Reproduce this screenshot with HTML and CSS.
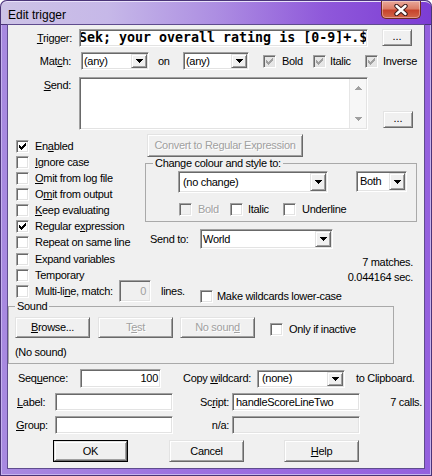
FILE: index.html
```html
<!DOCTYPE html>
<html lang="en">
<head>
<meta charset="utf-8">
<title>Edit trigger</title>
<link rel="stylesheet" href="styles.css">
</head>
<body>
<div class="window">
  <div class="titlebar">
    <span class="title">Edit trigger</span>
    <div class="close">
      <svg width="16" height="12" viewBox="0 0 16 12"><path d="M3.5 2L12.5 10M12.5 2L3.5 10" stroke="#3b1c1c" stroke-width="4.4" stroke-linecap="round"/><path d="M3.5 2L12.5 10M12.5 2L3.5 10" stroke="#fff" stroke-width="2.4" stroke-linecap="round"/></svg>
    </div>
  </div>
  <div class="client">
    <div class="row r-trigger">
      <span class="lbl w-trig"><u>T</u>rigger:</span>
      <div class="edit e-trigger"><div class="clip"><span class="mono">Sek; your overall rating is [0-9]+.$</span></div></div>
      <div class="btn b-dots b-dots1">...</div>
    </div>

    <div class="row r-match">
      <span class="lbl w-match">Mat<u>c</u>h:</span>
      <div class="edit combo c-any1"><span class="ctext">(any)</span><span class="dd"><svg width="7" height="4" viewBox="0 0 7 4"><path d="M0 0h7v1H0zM1 1h5v1H1zM2 2h3v1H2zM3 3h1v1H3z"/></svg></span></div>
      <span class="on">on</span>
      <div class="edit combo c-any2"><span class="ctext">(any)</span><span class="dd"><svg width="7" height="4" viewBox="0 0 7 4"><path d="M0 0h7v1H0zM1 1h5v1H1zM2 2h3v1H2zM3 3h1v1H3z"/></svg></span></div>
      <div class="chk i-bold"><span class="box ind"><svg class="tick" width="7" height="7" viewBox="0 0 7 7"><path d="M6 0h1v1h-1zM5 1h2v1h-2zM0 2h1v1h-1zM4 2h3v1h-3zM0 3h2v1h-2zM3 3h3v1h-3zM0 4h5v1h-5zM1 5h3v1h-3zM2 6h1v1h-1z"/></svg></span><span>Bold</span></div>
      <div class="chk i-italic"><span class="box ind"><svg class="tick" width="7" height="7" viewBox="0 0 7 7"><path d="M6 0h1v1h-1zM5 1h2v1h-2zM0 2h1v1h-1zM4 2h3v1h-3zM0 3h2v1h-2zM3 3h3v1h-3zM0 4h5v1h-5zM1 5h3v1h-3zM2 6h1v1h-1z"/></svg></span><span>Italic</span></div>
      <div class="chk i-inverse"><span class="box ind"><svg class="tick" width="7" height="7" viewBox="0 0 7 7"><path d="M6 0h1v1h-1zM5 1h2v1h-2zM0 2h1v1h-1zM4 2h3v1h-3zM0 3h2v1h-2zM3 3h3v1h-3zM0 4h5v1h-5zM1 5h3v1h-3zM2 6h1v1h-1z"/></svg></span><span>Inverse</span></div>
    </div>

    <div class="row r-send">
      <span class="lbl w-send"><u>S</u>end:</span>
      <div class="edit e-send">
        <div class="ta"></div>
        <div class="vscroll">
          <svg width="7" height="4" viewBox="0 0 7 4"><path d="M3 0h1v1H3zM2 1h3v1H2zM1 2h5v1H1zM0 3h7v1H0z"/></svg>
          <svg width="7" height="4" viewBox="0 0 7 4"><path d="M0 0h7v1H0zM1 1h5v1H1zM2 2h3v1H2zM3 3h1v1H3z"/></svg>
        </div>
      </div>
      <div class="btn b-dots b-dots2">...</div>
    </div>

    <div class="mid">
      <div class="clist">
        <div class="chk"><span class="box"><svg class="tick" width="7" height="7" viewBox="0 0 7 7"><path d="M6 0h1v1h-1zM5 1h2v1h-2zM0 2h1v1h-1zM4 2h3v1h-3zM0 3h2v1h-2zM3 3h3v1h-3zM0 4h5v1h-5zM1 5h3v1h-3zM2 6h1v1h-1z"/></svg></span><span>En<u>a</u>bled</span></div>
        <div class="chk"><span class="box"></span><span><u>I</u>gnore case</span></div>
        <div class="chk"><span class="box"></span><span><u>O</u>mit from log file</span></div>
        <div class="chk"><span class="box"></span><span>O<u>m</u>it from output</span></div>
        <div class="chk"><span class="box"></span><span><u>K</u>eep evaluating</span></div>
        <div class="chk"><span class="box"><svg class="tick" width="7" height="7" viewBox="0 0 7 7"><path d="M6 0h1v1h-1zM5 1h2v1h-2zM0 2h1v1h-1zM4 2h3v1h-3zM0 3h2v1h-2zM3 3h3v1h-3zM0 4h5v1h-5zM1 5h3v1h-3zM2 6h1v1h-1z"/></svg></span><span>Regular e<u>x</u>pression</span></div>
        <div class="chk"><span class="box"></span><span>Repeat on same line</span></div>
        <div class="chk c-gap"><span class="box"></span><span>Expand variables</span></div>
        <div class="chk"><span class="box"></span><span>Temporary</span></div>
      </div>

      <div class="rcol">
        <div class="btn dis b-convert">Convert to Regular Expression</div>
        <fieldset class="group g-colour">
          <legend>Change colour and style to:</legend>
          <div class="gb-row1">
            <div class="edit combo c-nochange"><span class="ctext">(no change)</span><span class="dd"><svg width="7" height="4" viewBox="0 0 7 4"><path d="M0 0h7v1H0zM1 1h5v1H1zM2 2h3v1H2zM3 3h1v1H3z"/></svg></span></div>
            <div class="edit combo c-both"><span class="ctext">Both</span><span class="dd"><svg width="7" height="4" viewBox="0 0 7 4"><path d="M0 0h7v1H0zM1 1h5v1H1zM2 2h3v1H2zM3 3h1v1H3z"/></svg></span></div>
          </div>
          <div class="gb-row2">
            <div class="chk i-gbold"><span class="box boxdis"></span><span class="distext">Bold</span></div>
            <div class="chk i-gitalic"><span class="box"></span><span>Italic</span></div>
            <div class="chk"><span class="box"></span><span>Underline</span></div>
          </div>
        </fieldset>
        <div class="r-sendto">
          <span class="w-sendto">Send to:</span>
          <div class="edit combo c-world"><span class="ctext">World</span><span class="dd"><svg width="7" height="4" viewBox="0 0 7 4"><path d="M0 0h7v1H0zM1 1h5v1H1zM2 2h3v1H2zM3 3h1v1H3z"/></svg></span></div>
        </div>
        <div class="stats">
          <div>7 matches.</div>
          <div>0.044164 sec.</div>
        </div>
      </div>
    </div>

    <div class="r-multi">
      <div class="chk m-chk"><span class="box"></span><span class="w-multi">Multi-li<u>n</u>e, match:</span></div>
      <div class="edit dis e-lines"><span>0</span></div>
      <span class="lines">lines.</span>
      <div class="chk m-lower"><span class="box"></span><span>Make wildcards lower-case</span></div>
    </div>

    <fieldset class="group g-sound">
      <legend>Sound</legend>
      <div class="snd-row">
        <div class="btn b-snd b-browse"><span><u>B</u>rowse...</span></div>
        <div class="btn dis b-snd b-test"><span>T<u>e</u>st</span></div>
        <div class="btn dis b-snd b-nosound"><span>No soun<u>d</u></span></div>
        <div class="chk s-inactive"><span class="box"></span><span>Only if inactive</span></div>
      </div>
      <div class="nosound">(No sound)</div>
    </fieldset>

    <div class="row r-seq">
      <span class="w-seq">Seq<u>u</u>ence:</span>
      <div class="edit e-seq"><span>100</span></div>
      <span class="w-copy">Copy <u>w</u>ildcard:</span>
      <div class="edit combo c-none"><span class="ctext">(none)</span><span class="dd"><svg width="7" height="4" viewBox="0 0 7 4"><path d="M0 0h7v1H0zM1 1h5v1H1zM2 2h3v1H2zM3 3h1v1H3z"/></svg></span></div>
      <span class="clip-lbl">to Clipboard.</span>
    </div>

    <div class="row r-label">
      <span class="w-label"><u>L</u>abel:</span>
      <div class="edit e-small"></div>
      <span class="w-script">Sc<u>r</u>ipt:</span>
      <div class="edit e-script"><span>handleScoreLineTwo</span></div>
      <span class="calls">7 calls.</span>
    </div>

    <div class="row r-group">
      <span class="w-group"><u>G</u>roup:</span>
      <div class="edit e-small"></div>
      <span class="w-script">n/a:</span>
      <div class="edit dis e-script"></div>
    </div>

    <div class="row r-buttons">
      <div class="defbtn b-ok"><div class="btn">OK</div></div>
      <div class="btn b-cancel">Cancel</div>
      <div class="btn b-help"><span><u>H</u>elp</span></div>
    </div>
  </div>
</div>
</body>
</html>
```

FILE: styles.css
```css
* { box-sizing: border-box; }
html, body { margin: 0; padding: 0; }
body {
  width: 432px;
  height: 476px;
  overflow: hidden;
  background: #ffffff;
  font-family: "Liberation Sans", Arial, sans-serif;
  font-size: 11px;
  line-height: 13px;
  letter-spacing: -0.3px;
  color: #000;
}
u { text-decoration: underline; text-underline-offset: 1px; text-decoration-thickness: 1px; }

/* ---------- window frame ---------- */
.window {
  width: 432px;
  height: 476px;
  display: flex;
  flex-direction: column;
  padding: 0 8px 8px;
  border-radius: 7px 7px 0 0;
  background: linear-gradient(to right, #a88ae0, #9d72e0 40%, #9460de);
  box-shadow: inset 0 0 0 1px #4a3478, inset 0 0 0 2px #c6b4ee;
}
.titlebar {
  height: 25px;
  margin: 0 -8px;
  padding-left: 8px;
  display: flex;
  align-items: flex-start;
  border-radius: 7px 7px 0 0;
  background: linear-gradient(to right, #cdc3e6 0%, #c6b8e8 25%, #ad8ee2 50%, #8f58da 75%, #7c3cd4 100%);
  box-shadow: inset 0 0 0 1px #4a3478, inset 0 2px 0 #e8e0fa;
}
.title {
  margin-top: 8px;
  font-size: 12px;
  line-height: 14px;
  letter-spacing: 0;
}
.close {
  margin-left: auto;
  margin-right: 11px;
  margin-top: 1px;
  width: 40px;
  height: 18px;
  display: flex;
  align-items: center;
  justify-content: center;
  border: 1px solid #6e2a22;
  border-top: 0;
  border-radius: 0 0 5px 5px;
  background: linear-gradient(to bottom, #e9a89a 0%, #dc7e68 45%, #c7442c 55%, #d2674a 100%);
  box-shadow: inset 0 0 0 1px rgba(255, 255, 255, 0.35);
}
.client {
  flex: 1;
  background: #f0f0f0;
  box-shadow: 0 0 0 1px #5f4c8e;
  display: flex;
  flex-direction: column;
}

/* ---------- common controls ---------- */
.row { display: flex; align-items: center; }
.lbl { text-align: right; flex: none; }

.edit {
  flex: none;
  background: #fff;
  border: 1px solid;
  border-color: #a0a0a0 #ffffff #ffffff #a0a0a0;
  box-shadow: inset 1px 1px 0 #696969, inset -1px -1px 0 #e3e3e3;
  padding: 1px;
}
.edit.dis { background: #f0f0f0; }

.btn {
  flex: none;
  display: flex;
  align-items: center;
  justify-content: center;
  background: #f0f0f0;
  border: 1px solid;
  border-color: #e3e3e3 #696969 #696969 #e3e3e3;
  box-shadow: inset 1px 1px 0 #ffffff, inset -1px -1px 0 #a0a0a0;
}
.btn.dis, .distext { color: #a0a0a0; text-shadow: 1px 1px 0 #fff; }

.combo { display: flex; align-items: stretch; }
.combo .ctext {
  flex: 1;
  display: flex;
  align-items: center;
  padding-left: 2px;
  white-space: nowrap;
  overflow: hidden;
}
.dd {
  width: 16px;
  flex: none;
  display: flex;
  align-items: center;
  justify-content: center;
  background: #f0f0f0;
  border: 1px solid;
  border-color: #e3e3e3 #696969 #696969 #e3e3e3;
  box-shadow: inset 1px 1px 0 #ffffff, inset -1px -1px 0 #a0a0a0;
}
.dd svg { fill: #000; }

.chk { display: flex; align-items: flex-start; gap: 6px; white-space: nowrap; }
.box {
  width: 13px;
  height: 13px;
  flex: none;
  display: flex;
  align-items: center;
  justify-content: center;
  background: #fff;
  border: 1px solid;
  border-color: #a0a0a0 #ffffff #ffffff #a0a0a0;
  box-shadow: inset 1px 1px 0 #696969, inset -1px -1px 0 #e3e3e3;
}
.box .tick { fill: #000; }
.box.ind { background: #e6e6e6; }
.box.ind .tick { fill: #a0a0a0; }
.box.boxdis { background: #f0f0f0; }

fieldset.group {
  margin: 0;
  padding: 0;
  border: 1px solid #a9a9a9;
  min-inline-size: 0;
}
fieldset.group legend { padding: 0 2px; line-height: 13px; }

/* ---------- row 1: trigger ---------- */
.r-trigger { margin-top: 4px; height: 18px; }
.w-trig { width: 64px; }
.e-trigger { margin-left: 7px; width: 289px; height: 18px; }
.e-trigger .clip { height: 100%; overflow: hidden; display: flex; align-items: center; }
.mono {
  margin-left: -2px;
  white-space: nowrap;
  font-family: "DejaVu Sans Mono", "Liberation Mono", monospace;
  font-weight: bold;
  font-size: 13.3px;
  letter-spacing: 0;
  line-height: 14px;
}
.b-dots { align-items: flex-end; padding-bottom: 2px; letter-spacing: 0; }
.b-dots1 { margin-left: 14px; width: 30px; height: 17px; align-self: flex-start; }

/* ---------- row 2: match ---------- */
.r-match { margin-top: 5px; height: 18px; }
.w-match { width: 63px; }
.r-match .combo { height: 18px; }
.r-match .combo .ctext { padding-left: 1px; }
.c-any1 { margin-left: 10px; width: 68px; }
.on { margin-left: 9px; width: 25px; }
.c-any2 { width: 66px; }
.r-match .chk { margin-top: 0; }
.i-bold { margin-left: 14px; width: 50px; }
.i-italic { width: 52px; gap: 4px; }
.i-inverse { gap: 5px; }

/* ---------- row 3: send ---------- */
.r-send { margin-top: 7px; height: 53px; align-items: stretch; }
.w-send { width: 63px; padding-top: 2px; }
.e-send { margin-left: 8px; width: 289px; height: 53px; display: flex; }
.ta { flex: 1; }
.vscroll {
  width: 17px;
  display: flex;
  flex-direction: column;
  justify-content: space-between;
  align-items: center;
  padding: 7px 0;
  background: #f7f7f7;
  border-left: 1px solid #e6e6e6;
}
.vscroll svg { fill: #a0a0a0; }
.b-dots2 { margin-left: 15px; width: 30px; height: 17px; align-self: flex-end; margin-bottom: 2px; }

/* ---------- middle section ---------- */
.mid { margin-top: 4px; height: 150px; display: flex; }
.clist { width: 137px; flex: none; padding: 5px 0 0 8px; }
.clist .chk { height: 16px; padding-top: 1px; }
.clist .c-gap { margin-top: 1px; }

.rcol { width: 272px; flex: none; }
.b-convert { margin-left: 2px; width: 156px; height: 23px; }
.g-colour { margin-top: 2px; width: 272px; height: 65px; }
.g-colour legend { margin-left: 7px; }
.gb-row1 { display: flex; align-items: flex-start; margin-top: 1px; }
.c-nochange { margin-left: 32px; width: 150px; height: 22px; }
.c-nochange .ctext { padding-left: 3px; }
.c-both { margin-left: 28px; width: 51px; height: 21px; }
.gb-row2 { display: flex; margin-top: 9px; height: 16px; padding-top: 1px; }
.i-gbold { margin-left: 33px; width: 51px; }
.i-gitalic { width: 53px; gap: 5px; }

.r-sendto { margin-top: 7px; height: 20px; display: flex; align-items: center; }
.w-sendto { margin-left: 5px; width: 50px; flex: none; }
.c-world { width: 133px; height: 20px; }
.c-world .ctext { padding-left: 1px; }

.stats { margin-top: 6px; padding-right: 4px; text-align: right; line-height: 15px; }

/* ---------- multi-line row ---------- */
.r-multi { height: 16px; display: flex; align-items: flex-start; }
.m-chk { margin-left: 8px; margin-top: 1px; }
.w-multi { width: 84px; }
.e-lines {
  margin-top: -4px;
  width: 32px;
  height: 22px;
  display: flex;
  align-items: center;
  justify-content: flex-end;
  padding-right: 4px;
  color: #a0a0a0;
}
.lines { margin-left: 10px; width: 29px; margin-top: 1px; }
.m-lower { margin-left: 10px; margin-top: 6px; gap: 4px; }

/* ---------- sound group ---------- */
.g-sound { margin: 4px 0 0 8px; width: 386px; height: 64px; }
.g-sound legend { margin-left: 6px; }
.snd-row { display: flex; align-items: flex-start; margin-top: 4px; }
.b-snd { width: 75px; height: 21px; }
.b-browse { margin-left: 6px; }
.b-test { margin-left: 8px; }
.b-nosound { margin-left: 7px; }
.s-inactive { margin-left: 15px; margin-top: 6px; }
.nosound { margin: 8px 0 0 6px; }

/* ---------- bottom rows ---------- */
.r-seq { margin-top: 5px; height: 19px; }
.w-seq { margin-left: 10px; width: 62px; flex: none; }
.e-seq {
  width: 81px;
  height: 19px;
  display: flex;
  align-items: center;
  justify-content: flex-end;
  padding-right: 2px;
}
.w-copy { margin-left: 22px; width: 74px; flex: none; }
.c-none { width: 88px; height: 18px; }
.c-none .ctext { padding-left: 3px; }
.clip-lbl { margin-left: 11px; }

.r-label, .r-group { margin-top: 5px; height: 18px; }
.w-label { margin-left: 9px; width: 38px; flex: none; }
.w-group { margin-left: 8px; width: 39px; flex: none; }
.e-small { width: 118px; height: 18px; }
.w-script { width: 56px; text-align: right; flex: none; }
.e-script {
  margin-left: 3px;
  width: 128px;
  height: 18px;
  display: flex;
  align-items: center;
  padding-left: 3px;
}
.calls { flex: 1; text-align: right; padding-right: 2px; }

.r-buttons { margin-top: 6px; height: 22px; }
.r-buttons .btn { height: 22px; }
.defbtn { margin-left: 45px; width: 75px; height: 22px; border: 1px solid #000; flex: none; }
.defbtn .btn { width: 100%; height: 100%; }
.b-cancel { margin-left: 41px; width: 75px; }
.b-help { margin-left: 40px; width: 75px; }
```
